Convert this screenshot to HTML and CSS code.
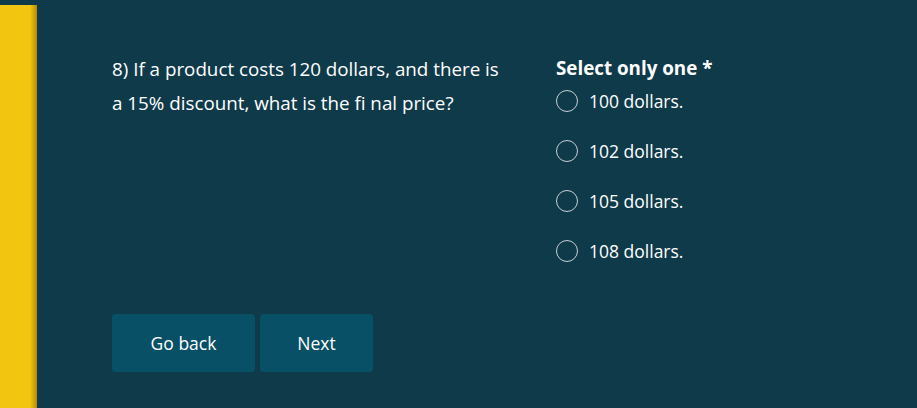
FILE: index.html
```html
<!DOCTYPE html>
<html>
<head>
<meta charset="utf-8">
<link rel="stylesheet" href="styles.css">
</head>
<body>
<div class="page">
  <div class="accent"></div>
  <main class="panel">
    <div class="row">
      <div class="question">8) If a product costs 120 dollars, and there is a 15% discount, what is the fi nal price?</div>
      <div class="options">
        <div class="label">Select only one *</div>
        <label class="opt"><span class="radio"></span><span>100 dollars.</span></label>
        <label class="opt"><span class="radio"></span><span>102 dollars.</span></label>
        <label class="opt"><span class="radio"></span><span>105 dollars.</span></label>
        <label class="opt"><span class="radio"></span><span>108 dollars.</span></label>
      </div>
    </div>
    <div class="buttons">
      <button class="btn back">Go back</button>
      <button class="btn next">Next</button>
    </div>
  </main>
</div>
</body>
</html>
```
FILE: styles.css
```css
html, body { margin: 0; padding: 0; }
body {
  background: #0f3a4a;
  font-family: "Open Sans", "Noto Sans", sans-serif;
  color: #ffffff;
  width: 917px;
  height: 408px;
  overflow: hidden;
}
.page {
  display: flex;
  height: 408px;
}
.accent {
  width: 37px;
  margin-top: 5px;
  background: linear-gradient(to right, #f2c511 0, #f2c511 30px, #d9ad0c 33px, #b08a08 37px);
  flex: none;
}
.panel {
  flex: 1;
  background: #0f3a4a;
  border-bottom-left-radius: 4px;
  padding: 52px 0 0 75px;
  box-sizing: border-box;
}
.row { display: flex; }
.question {
  width: 396px;
  margin-right: 48px;
  font-size: 18.8px;
  line-height: 34px;
}
.options { display: flex; flex-direction: column; }
.label {
  font-weight: 700;
  font-size: 18.8px;
  line-height: 32px;
}
.opt {
  display: flex;
  align-items: center;
  height: 34px;
  margin-bottom: 16px;
  font-size: 17.5px;
}
.opt:last-child { margin-bottom: 0; }
.radio {
  width: 22px;
  height: 22px;
  border: 1px solid #c8cfd3;
  border-radius: 50%;
  box-sizing: border-box;
  margin-right: 11px;
}
.buttons {
  display: flex;
  gap: 5px;
  margin-top: 46px;
}
.btn {
  height: 58px;
  border: none;
  border-radius: 4px;
  background: #085066;
  color: #fff;
  font-family: inherit;
  font-size: 17.5px;
}
.back { width: 143px; }
.next { width: 113px; }
```
